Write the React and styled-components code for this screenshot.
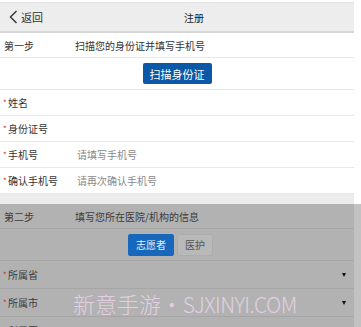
import React from "react";
import styled, { createGlobalStyle } from "styled-components";

const Global = createGlobalStyle`
  html, body { margin: 0; padding: 0; background: #ffffff; }
  body { font-family: "Noto Sans CJK SC", "Noto Sans", sans-serif; }
  * { box-sizing: border-box; }
`;

const Page = styled.div`
  position: relative;
  width: 361px;
  height: 327px;
  overflow: hidden;
  padding-top: 2px;
`;

const Main = styled.div`
  width: 354px;
`;

const Header = styled.div`
  display: flex;
  align-items: center;
  height: 31px;
  background: #ededed;
  border-top: 1px solid #e2e2e2;
  border-bottom: 2px solid #d6d6d6;
`;

const Back = styled.div`
  display: flex;
  align-items: center;
  gap: 3px;
  width: 184px;
  padding-left: 9px;
  font-size: 11px;
  color: #333;
`;

const Title = styled.div`
  font-size: 10px;
  color: #222;
`;

const Row = styled.div`
  display: flex;
  align-items: center;
  height: ${(p) => p.$h || 26}px;
  padding-left: ${(p) => p.$pl ?? 4}px;
  padding-right: 6px;
  border-bottom: 1px solid ${(p) => (p.$dark ? "#a6a6a6" : "#e8e8e8")};
  font-size: 10px;
  color: ${(p) => (p.$dark ? "#3c3c3c" : "#333")};
  justify-content: ${(p) => (p.$center ? "center" : "flex-start")};
`;

const StepName = styled.span`
  width: 71px;
`;

const Label = styled.span`
  display: flex;
  align-items: center;
  width: 74px;
`;

const Star = styled.span`
  color: #d8232a;
  font-size: 8px;
  width: 5px;
  line-height: 1;
  margin-top: 1px;
`;

const Placeholder = styled.span`
  color: #8a8a8a;
`;

const ScanButton = styled.div`
  height: 21px;
  padding: 0 7px;
  display: flex;
  align-items: center;
  background: #0a58a6;
  color: #fff;
  font-size: 11px;
  border-radius: 2px;
  margin-left: 2px;
`;

const Band = styled.div`
  height: 10px;
  background: #ececec;
`;

const Section = styled.div`
  background: #c2c2c2;
`;

const SectionInner = styled.div`
  width: 354px;
  background: #b2b2b2;
`;

const Toggle = styled.div`
  display: flex;
  margin-left: -8px;
`;

const ToggleBtn = styled.div`
  height: 22px;
  padding: 0 7px;
  display: flex;
  align-items: center;
  font-size: 10px;
  border-radius: 2px;
  background: ${(p) => (p.$active ? "#1768bd" : "#b9b9b9")};
  color: ${(p) => (p.$active ? "#e8eef6" : "#555")};
  border: 1px solid ${(p) => (p.$active ? "#1768bd" : "#adadad")};
  margin-right: 3px;
`;

const SelectRow = styled(Row)`
  justify-content: space-between;
  padding-right: 8px;
`;

const Caret = styled.span`
  width: 0;
  height: 0;
  border-left: 2.5px solid transparent;
  border-right: 2.5px solid transparent;
  border-top: 4px solid #111;
`;

const Watermark = styled.div`
  position: absolute;
  left: 73px;
  top: 287px;
  font-size: 22px;
  font-weight: 300;
  color: rgba(236, 214, 236, 0.85);
  white-space: nowrap;
  word-spacing: -5px;
`;

const Latin = styled.span`
  font-size: 21px;
  letter-spacing: -0.6px;
`;

function Chevron() {
  return (
    <svg width="9" height="14" viewBox="0 0 9 14">
      <polyline points="7.5,1 1.5,7 7.5,13" fill="none" stroke="#333" strokeWidth="1.4" />
    </svg>
  );
}

function Field({ label, placeholder }) {
  return (
    <Row $pl={3}>
      <Label>
        <Star>*</Star>
        {label}
      </Label>
      {placeholder && <Placeholder>{placeholder}</Placeholder>}
    </Row>
  );
}

function Select({ label }) {
  return (
    <SelectRow $dark $h={28} $pl={3}>
      <Label>
        <Star>*</Star>
        {label}
      </Label>
      <Caret />
    </SelectRow>
  );
}

export default function App() {
  return (
    <>
      <Global />
      <Page>
        <Main>
          <Header>
            <Back>
              <Chevron />
              返回
            </Back>
            <Title>注册</Title>
          </Header>
          <Row $h={25}>
            <StepName>第一步</StepName>
            扫描您的身份证并填写手机号
          </Row>
          <Row $h={32} $center>
            <ScanButton>扫描身份证</ScanButton>
          </Row>
          <Field label="姓名" />
          <Field label="身份证号" />
          <Field label="手机号" placeholder="请填写手机号" />
          <Field label="确认手机号" placeholder="请再次确认手机号" />
          <Band />
        </Main>
        <Section>
          <SectionInner>
            <Row $dark $h={25}>
              <StepName>第二步</StepName>
              填写您所在医院/机构的信息
            </Row>
            <Row $dark $h={32} $center>
              <Toggle>
                <ToggleBtn $active>志愿者</ToggleBtn>
                <ToggleBtn>医护</ToggleBtn>
              </Toggle>
            </Row>
            <Select label="所属省" />
            <Select label="所属市" />
            <Select label="所属区" />
          </SectionInner>
        </Section>
        <Watermark>
          新意手游 • <Latin>SJXINYI.COM</Latin>
        </Watermark>
      </Page>
    </>
  );
}
